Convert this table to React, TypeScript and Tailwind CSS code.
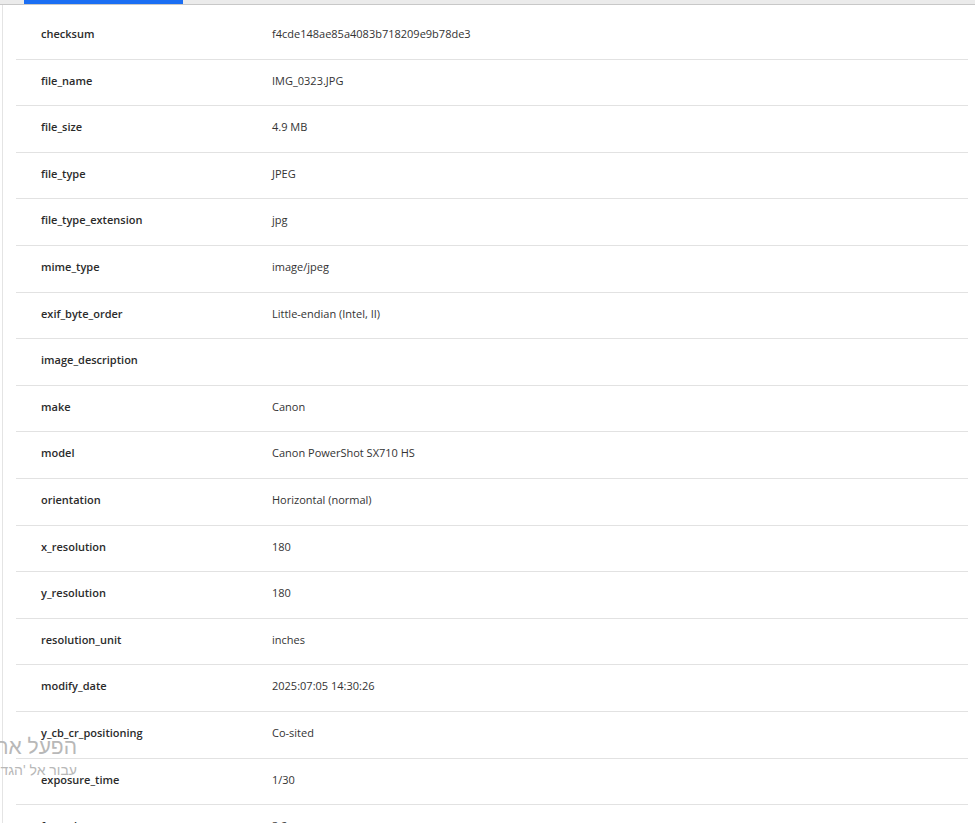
const rows: [string, string][] = [
  ['checksum', 'f4cde148ae85a4083b718209e9b78de3'],
  ['file_name', 'IMG_0323.JPG'],
  ['file_size', '4.9 MB'],
  ['file_type', 'JPEG'],
  ['file_type_extension', 'jpg'],
  ['mime_type', 'image/jpeg'],
  ['exif_byte_order', 'Little-endian (Intel, II)'],
  ['image_description', ''],
  ['make', 'Canon'],
  ['model', 'Canon PowerShot SX710 HS'],
  ['orientation', 'Horizontal (normal)'],
  ['x_resolution', '180'],
  ['y_resolution', '180'],
  ['resolution_unit', 'inches'],
  ['modify_date', '2025:07:05 14:30:26'],
  ['y_cb_cr_positioning', 'Co-sited'],
  ['exposure_time', '1/30'],
  ['f_number', '3.2'],
  ['iso', '800'],
]

export default function App() {
  return (
    <div className="relative h-[823px] w-[975px] overflow-hidden bg-white font-['Open_Sans',sans-serif] text-[11px] text-[#333]">
      <div className="h-[5px] border-b border-[#c8c8c8] bg-[#ebebeb]">
        <div className="ml-[24px] h-[4px] w-[159px] bg-[#1b6ef3]" />
      </div>

      <div className="ml-[2px] h-full border-l border-[#e4e4e4] pl-[13px] pr-[7px] pt-[8px]">
        {rows.map(([key, value]) => (
          <div key={key} className="flex h-[46.6px] items-center border-b border-[#e2e2e2] pb-[3px]">
            <div className="w-[256px] shrink-0 pl-[25px] font-semibold text-[#2b2b2b]">{key}</div>
            <div className="text-[#333]">{value}</div>
          </div>
        ))}
      </div>

      <div
        dir="rtl"
        className="pointer-events-none absolute right-[898px] top-[734px] whitespace-nowrap font-['Liberation_Sans','DejaVu_Sans',sans-serif] text-[#b8b8b8]"
      >
        <div className="text-[21px] leading-[26px]">הפעל את Windows</div>
        <div className="text-[14px] leading-[20px]">עבור אל 'הגדרות' כדי להפעיל את Windows.</div>
      </div>
    </div>
  )
}
